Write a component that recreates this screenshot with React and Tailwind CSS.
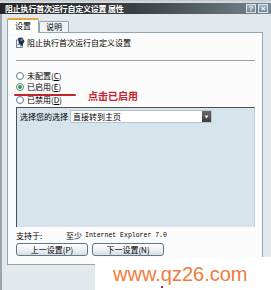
import React from 'react';

const cjk = "font-['Noto_Sans_CJK_SC','Noto_Sans',sans-serif]";

function Radio({ checked, label, hotkey, className }) {
  return (
    <div className={`flex items-center h-[10px] ${className}`}>
      <span className="w-[8px] h-[8px] rounded-full border border-[#5e7a8c] bg-white flex items-center justify-center">
        {checked && <span className="w-[4px] h-[4px] rounded-full bg-[#2f9a3a]" />}
      </span>
      <span className="ml-[3px] text-[8px] leading-[10px]">
        {label}(<span className="underline">{hotkey}</span>)
      </span>
    </div>
  );
}

function PolicyIcon() {
  return (
    <svg width="9" height="11" viewBox="0 0 9 11">
      <rect x="0.5" y="3" width="6" height="7.5" fill="#e8eef2" stroke="#5a6a78" strokeWidth="0.8" />
      <path d="M2 1 L6 0.5 L8.5 4 L6 9 L3 7 Z" fill="#1d2a48" />
      <circle cx="5.5" cy="3" r="1.2" fill="#6a8ac0" />
      <path d="M1.5 8 L4 6.5 L5 9.5" stroke="#3a5a9a" strokeWidth="0.8" fill="none" />
    </svg>
  );
}

function XpButton({ children }) {
  return (
    <button
      type="button"
      className="w-[72px] h-[13px] rounded-[3px] border border-[#5f7888] bg-gradient-to-b from-[#fdfdfd] via-[#eef1f3] to-[#d6dde2] text-[8px] leading-[11px] text-black"
    >
      {children}
    </button>
  );
}

export default function App() {
  return (
    <div className={`relative w-[271px] h-[290px] overflow-hidden bg-[#c6d0d6] text-black ${cjk}`}>
      {/* strip of the window behind */}
      <div className="h-[3px] bg-gradient-to-b from-[#bfc6ca] to-[#dfe3e6]" />

      {/* title bar */}
      <div className="h-[11px] flex items-center justify-between pl-[5px] pr-[3px] bg-gradient-to-r from-[#252525] via-[#3b4043] to-[#768891]">
        <span className="text-white text-[8px] leading-[11px] font-bold tracking-[-0.2px]">阻止执行首次运行自定义设置 属性</span>
        <div className="flex gap-[2px]">
          <span className="w-[10px] h-[9px] border border-[#d8e4ea] bg-gradient-to-b from-[#9fb6c4] to-[#6d8a9b] text-white text-[7px] leading-[7px] flex items-center justify-center font-bold font-['Liberation_Sans',sans-serif]">?</span>
          <span className="w-[10px] h-[9px] border border-[#d8e4ea] bg-gradient-to-b from-[#9fb6c4] to-[#6d8a9b] text-white text-[8px] leading-[7px] flex items-center justify-center font-bold font-['Liberation_Sans',sans-serif]">×</span>
        </div>
      </div>

      {/* body */}
      <div className="flex flex-col pl-[5px] pr-[8px] border-l-2 border-[#9aa7af] bg-[#e2e8eb] h-[276px]">
        {/* tabs */}
        <div className="h-[18px] flex items-end pt-[3px]">
          <div className="w-[32px] h-[15px] bg-white border border-b-0 border-[#91a7b4] border-t-2 border-t-[#e8a33d] rounded-t-[2px] text-[8px] leading-[12px] text-center relative z-10 -mb-px">
            设置
          </div>
          <div className="w-[30px] h-[11px] bg-[#f1f4f5] border border-b-0 border-[#91a7b4] rounded-t-[2px] text-[8px] leading-[10px] text-center">
            说明
          </div>
        </div>

        {/* panel */}
        <div className="relative h-[233px] bg-[#fbfbfb] border border-[#91a7b4] pl-[8px] pr-[7px] flex flex-col">
          <div className="mt-[2px] h-[13px] flex items-end">
            <PolicyIcon />
            <span className="ml-[2px] text-[8px] leading-[10px]">阻止执行首次运行自定义设置</span>
          </div>
          <div className="mt-[12px] h-px bg-[#9c9c9c]" />

          <Radio label="未配置" hotkey="C" className="mt-[10px]" />
          <Radio label="已启用" hotkey="E" checked className="mt-[1px]" />
          <Radio label="已禁用" hotkey="D" className="mt-[3px]" />

          {/* options box */}
          <div className="mt-[2px] h-[120px] bg-[#d6e4eb] border-t border-l border-[#4f4f4f] border-r border-r-[#c2ced4] pl-[3px] pt-[2px]">
            <div className="flex items-center h-[13px]">
              <span className="text-[8px] leading-[10px] w-[50px]">选择您的选择</span>
              <div className="w-[142px] h-[13px] bg-white border border-[#b8c4ca] flex items-center justify-between">
                <span className="pl-[2px] text-[8px] leading-[10px]">直接转到主页</span>
                <span className="w-[9px] h-[11px] bg-gradient-to-b from-[#6a6a6a] to-[#3e3e3e] flex items-center justify-center">
                  <svg width="5" height="4" viewBox="0 0 5 4"><path d="M0.5 0.5 L4.5 0.5 L2.5 3.5 Z" fill="#fff" /></svg>
                </span>
              </div>
            </div>
          </div>

          <div className="mt-[4px] h-[9px] flex items-center">
            <span className="text-[8px] leading-[9px] w-[50px]">支持于:</span>
            <span className="text-[8px] leading-[9px]">至少</span>
            <span className="ml-[3px] text-[6.5px] leading-[9px] font-['Liberation_Mono',monospace]">Internet Explorer 7.0</span>
          </div>

          <div className="mt-[3px] flex gap-[4px]">
            <XpButton>上一设置(P)</XpButton>
            <XpButton>下一设置(N)</XpButton>
          </div>

          {/* red annotation */}
          <div className="absolute left-[6px] top-[61px] w-[62px] h-[2px] bg-[#c8232b] rounded-full" />
          <div className="absolute left-[80px] top-[57px] text-[10px] leading-[12px] font-bold text-[#c8232b]">点击已启用</div>
        </div>
      </div>

      {/* watermark */}
      <div className="absolute left-[95px] top-[257px] w-[176px] h-[33px] bg-white pl-[18px] pt-[5px]">
        <span className="text-[20px] leading-[22px] text-[#f37a3b] font-['Liberation_Sans',sans-serif]">www.qz26.com</span>
        <span className="absolute left-[66px] top-[29px] w-[2px] h-[2px] bg-[#a01818]" />
      </div>
    </div>
  );
}
